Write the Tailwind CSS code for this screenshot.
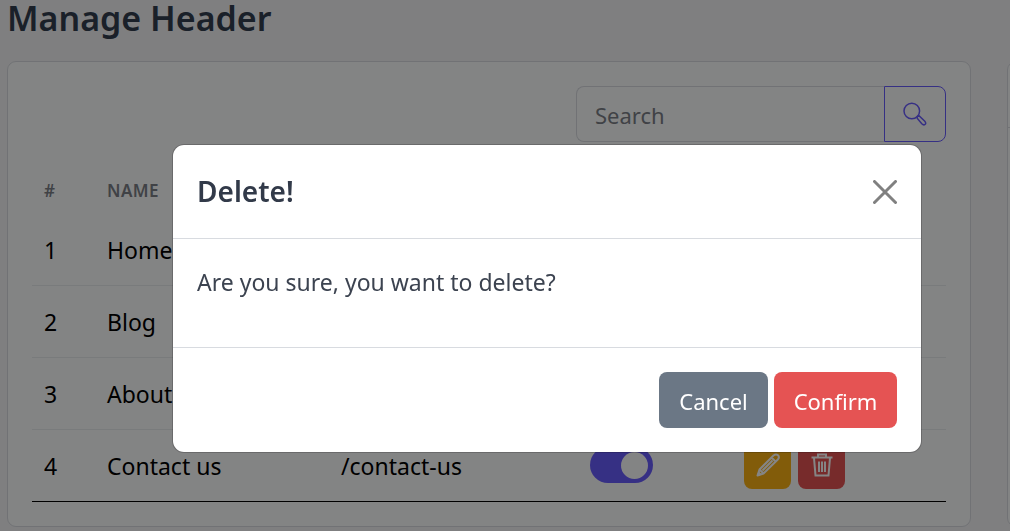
<!DOCTYPE html>
<html lang="en">
<head>
    <meta charset="UTF-8">
    <meta name="viewport" content="width=device-width, initial-scale=1.0">
    <title>Manage Header</title>
    <script src="https://cdn.jsdelivr.net/npm/@tailwindcss/browser@4"></script>
</head>
<body class="min-h-screen bg-[#f3f4f6] font-['Segoe_UI','Noto_Sans',sans-serif] text-[22px] text-black">
    <svg class="hidden" aria-hidden="true">
        <symbol id="icon-pencil" viewBox="0 0 24 24">
            <path fill="none" stroke="currentColor" stroke-width="2" stroke-linejoin="round" d="M1.500 22.500L3.500 16.500L17.500 2.500Q20 .5 22 2.200Q23.800 4.200 21.800 6.500L7.500 20.500ZM3.500 16.500L7.500 20.500M15.500 4.500L19.500 8.500M6.500 17.500L16.500 7.500"/>
            <path fill="currentColor" d="M1 23l1.500-5 3.500 3.500z"/>
        </symbol>
        <symbol id="icon-trash" viewBox="0 0 24 24">
            <path fill="none" stroke="currentColor" stroke-width="2" d="M1.500 4.500H22.500M8 4V1.500H16V4M4 5L5.500 22.500H18.500L20 5"/>
            <path fill="none" stroke="currentColor" stroke-width="2" d="M9 8.500V19M12 8.500V19M15 8.500V19"/>
        </symbol>
    </svg>

    <main class="overflow-hidden pl-[7px]">
        <h1 class="mb-6 text-[34px]/[37px] font-semibold text-[#323e4f]">Manage Header</h1>

        <div class="grid grid-cols-[minmax(0,1fr)_3px] gap-9">
            <section class="rounded-[9px] border border-[#d8dbe0] bg-[#fcfdfe] p-6">
                <form class="ml-auto flex h-14 w-[370px]">
                    <input type="search" aria-label="Search" placeholder="Search" class="min-w-0 flex-1 rounded-l-lg border border-r-0 border-[#d8dbe0] px-[18px] pt-0.5 placeholder:text-[#7b7f87]">
                    <button type="button" aria-label="Search" class="flex w-[62px] items-center justify-center rounded-r-lg border border-[#695cfe] text-[#695cfe]">
                        <svg class="size-6" viewBox="0 0 24 24" fill="none" stroke="currentColor" stroke-width="1.500">
                            <circle cx="8.800" cy="9" r="7.800"/>
                            <path d="M14.300 14.500L16 13.600L21.800 19.300Q23.500 21.300 22 22.500Q20.500 23.500 18.800 21.800L14.200 16.300Z"/>
                        </svg>
                    </button>
                </form>

                <table class="mt-6 w-full table-fixed border-collapse text-left text-[23px]">
                    <colgroup>
                        <col class="w-[63px]">
                        <col class="w-[234px]">
                        <col class="w-[249px]">
                        <col class="w-[154px]">
                        <col>
                    </colgroup>
                    <thead>
                        <tr class="h-[47px] text-[17px] text-[#7b7f87]">
                            <th class="px-3 pt-0.5 font-semibold">#</th>
                            <th class="px-3 pt-0.5 font-semibold tracking-wide">NAME</th>
                            <th></th>
                            <th></th>
                            <th></th>
                        </tr>
                    </thead>
                    <tbody>
                        <tr class="h-18 border-b border-[#e9ebee]">
                            <td class="px-3 pt-0.5">1</td>
                            <td class="px-3 pt-0.5">Home</td>
                            <td></td>
                            <td></td>
                            <td></td>
                        </tr>
                        <tr class="h-18 border-b border-[#e9ebee]">
                            <td class="px-3 pt-0.5">2</td>
                            <td class="px-3 pt-0.5">Blog</td>
                            <td></td>
                            <td></td>
                            <td></td>
                        </tr>
                        <tr class="h-18 border-b border-[#e9ebee]">
                            <td class="px-3 pt-0.5">3</td>
                            <td class="px-3 pt-0.5">About</td>
                            <td></td>
                            <td></td>
                            <td></td>
                        </tr>
                        <tr class="h-18 border-b border-black">
                            <td class="px-3 pt-0.5">4</td>
                            <td class="px-3 pt-0.5">Contact us</td>
                            <td class="px-3 pt-0.5">/contact-us</td>
                            <td class="px-3">
                                <label class="flex h-9 w-[63px] items-center justify-end rounded-full bg-[#695cfe] pr-[5px]">
                                    <input type="checkbox" checked aria-label="Contact us enabled" class="size-[27px] appearance-none rounded-full bg-[#fcfdfe]">
                                </label>
                            </td>
                            <td class="px-3">
                                <div class="flex gap-[7px] text-white">
                                    <button type="button" aria-label="Edit" class="flex h-12 w-[47px] items-center justify-center rounded-lg bg-[#f9b115]"><svg class="size-6"><use href="#icon-pencil"/></svg></button>
                                    <button type="button" aria-label="Remove" class="flex h-12 w-[47px] items-center justify-center rounded-lg bg-[#e55353]"><svg class="size-6"><use href="#icon-trash"/></svg></button>
                                </div>
                            </td>
                        </tr>
                    </tbody>
                </table>
            </section>

            <section class="w-80 rounded-[9px] border border-[#d8dbe0] bg-[#fcfdfe]">
                <div class="h-[66px] border-b border-[#d8dbe0]"></div>
            </section>
        </div>
    </main>

    <!-- Delete confirmation -->
    <div class="fixed inset-0 flex items-start justify-center bg-black/48 pt-36 pl-[84px]">
        <div role="dialog" aria-modal="true" aria-labelledby="deleteTitle" class="w-full max-w-[750px] rounded-xl border border-black/20 bg-white bg-clip-padding text-[#3c4350]">
            <div class="flex items-center justify-between border-b border-[#d8dbe0] p-6">
                <h2 id="deleteTitle" class="text-[28px]/[45px] font-semibold text-[#323a49]">Delete!</h2>
                <button type="button" aria-label="Close" class="text-[#808080]">
                    <svg class="size-6" viewBox="0 0 24 24" fill="none" stroke="currentColor" stroke-width="3" stroke-linecap="round">
                        <path d="M1.500 1.500L22.500 22.500M22.500 1.500L1.500 22.500"/>
                    </svg>
                </button>
            </div>
            <div class="border-b border-[#d8dbe0] p-6">
                <p class="mb-[22px] text-[23px]/[38px]">Are you sure, you want to delete?</p>
            </div>
            <div class="flex justify-end gap-1.5 p-6 text-white">
                <button type="button" class="h-14 w-[109px] rounded-lg bg-[#6b7785] pt-0.5">Cancel</button>
                <button type="button" class="h-14 w-[123px] rounded-lg bg-[#e55353] pt-0.5">Confirm</button>
            </div>
        </div>
    </div>
</body>
</html>
